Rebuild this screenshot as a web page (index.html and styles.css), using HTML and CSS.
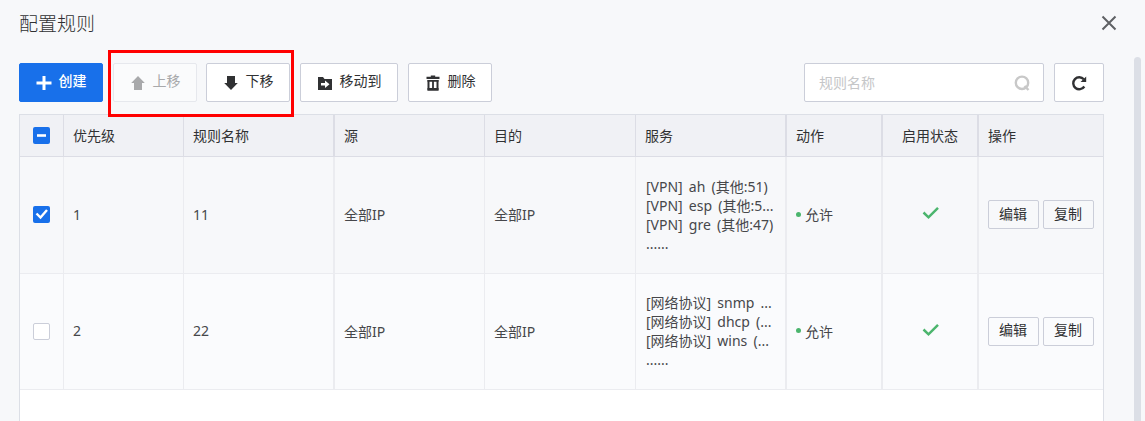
FILE: index.html
```html
<!DOCTYPE html>
<html lang="zh-CN">
<head>
  <meta charset="UTF-8" />
  <title>配置规则</title>
  <link rel="stylesheet" href="styles.css">
</head>
<body>
  <div class="dialog">
    <div class="dialog-header">
      <h1>配置规则</h1>
      <svg class="close" width="16" height="16" viewBox="0 0 16 16"><path d="M1.500 1.500l13 13M14.500 1.500l-13 13" fill="none" stroke="#5f6164" stroke-width="2"/></svg>
    </div>

    <div class="toolbar">
      <button class="btn primary">
        <svg width="16" height="16" viewBox="0 0 16 16"><path d="M8 1v14M.5 8h15" stroke="#fff" stroke-width="3"/></svg>
        <span>创建</span>
      </button>
      <div class="move-group">
        <button class="btn disabled">
          <svg width="16" height="16" viewBox="0 0 16 16"><path d="M8 1l6.800 7H12v7H4V8H1.200z" fill="#a8a9ab"/></svg>
          <span>上移</span>
        </button>
        <button class="btn">
          <svg width="16" height="16" viewBox="0 0 16 16"><path d="M8 15l6.800-7H12V1H4v7H1.200z" fill="#303133"/></svg>
          <span>下移</span>
        </button>
        <div class="highlight"></div>
      </div>
      <button class="btn wide">
        <svg width="16" height="16" viewBox="0 0 16 16"><path d="M1 2h5l1.500 2H15v11H1z" fill="#303133"/><path d="M4 8h4V5.500L12.500 9.300 8 13v-2.500H4z" fill="#fff"/></svg>
        <span>移动到</span>
      </button>
      <button class="btn">
        <svg width="16" height="16" viewBox="0 0 16 16"><path d="M1.500 1.800h4.300V.5h4.400v1.300h4.300V4h-13z" fill="#303133"/><path d="M3.500 5v9.500h9V5" fill="none" stroke="#303133" stroke-width="2"/><path d="M2.500 5h11v1.800h-11zM2.500 13h11v2.500h-11zM7.100 6h1.800v8H7.100z" fill="#303133"/></svg>
        <span>删除</span>
      </button>
      <div class="search">
        <span>规则名称</span>
        <svg width="16" height="16" viewBox="0 0 16 16"><circle cx="8" cy="7.800" r="6.200" fill="none" stroke="#c8c8c8" stroke-width="2.400"/><path d="M10.500 11l4 4" stroke="#c8c8c8" stroke-width="2.400"/></svg>
      </div>
      <button class="btn refresh">
        <svg width="16" height="16" viewBox="0 0 16 16"><path d="M12.800 4.300A6 6 0 1 0 13.300 11.500" fill="none" stroke="#303133" stroke-width="2.400"/><path d="M15.200 1.500v5.500H9.500z" fill="#303133"/></svg>
      </button>
    </div>

    <div class="table">
      <div class="row head">
        <div class="cell check"><span class="checkbox checked"><svg width="17" height="17" viewBox="0 0 17 17"><path d="M4 8.500h9" stroke="#fff" stroke-width="2.600"/></svg></span></div>
        <div class="cell">优先级</div>
        <div class="cell thick">规则名称</div>
        <div class="cell">源</div>
        <div class="cell">目的</div>
        <div class="cell thick">服务</div>
        <div class="cell thick">动作</div>
        <div class="cell thick center">启用状态</div>
        <div class="cell">操作</div>
      </div>

      <div class="row selected">
        <div class="cell check"><span class="checkbox checked"><svg width="17" height="17" viewBox="0 0 17 17"><path d="M3.500 7.500l4 4 6.500-7.500" fill="none" stroke="#fff" stroke-width="2.400"/></svg></span></div>
        <div class="cell">1</div>
        <div class="cell thick">11</div>
        <div class="cell">全部IP</div>
        <div class="cell">全部IP</div>
        <div class="cell thick services">
          <p>[VPN] ah (其他:51)</p>
          <p>[VPN] esp (其他:5...</p>
          <p>[VPN] gre (其他:47)</p>
          <p>......</p>
        </div>
        <div class="cell thick"><i class="dot"></i>允许</div>
        <div class="cell thick center"><svg class="tick" width="18" height="14" viewBox="0 0 18 14"><path d="M1.500 6.500l5 4.800 9.500-9.500" fill="none" stroke="#4bb56d" stroke-width="2.500"/></svg></div>
        <div class="cell actions"><button>编辑</button><button>复制</button></div>
      </div>

      <div class="row">
        <div class="cell check"><span class="checkbox"></span></div>
        <div class="cell">2</div>
        <div class="cell thick">22</div>
        <div class="cell">全部IP</div>
        <div class="cell">全部IP</div>
        <div class="cell thick services">
          <p>[网络协议] snmp ...</p>
          <p>[网络协议] dhcp (...</p>
          <p>[网络协议] wins (...</p>
          <p>......</p>
        </div>
        <div class="cell thick"><i class="dot"></i>允许</div>
        <div class="cell thick center"><svg class="tick" width="18" height="14" viewBox="0 0 18 14"><path d="M1.500 6.500l5 4.800 9.500-9.500" fill="none" stroke="#4bb56d" stroke-width="2.500"/></svg></div>
        <div class="cell actions"><button>编辑</button><button>复制</button></div>
      </div>
    </div>

    <div class="scrollbar"></div>
  </div>
</body>
</html>
```
FILE: styles.css
```css
* {
  box-sizing: border-box;
  margin: 0;
  padding: 0;
}

body {
  font-family: "Noto Sans", "Noto Sans CJK SC", sans-serif;
  font-size: 14px;
  color: #46474a;
  background: #f7f8fa;
  overflow: hidden;
}

.dialog {
  position: relative;
  display: flex;
  flex-direction: column;
  height: 421px;
  padding: 0 41px 0 19px;
}

.dialog-header {
  display: flex;
  justify-content: space-between;
  align-items: center;
  height: 46px;
  margin-right: -13px;
  margin-bottom: 17px;
  flex: none;
}

.dialog-header h1 {
  margin-top: -2px;
  font-size: 19px;
  font-weight: 300;
  font-family: "Noto Sans CJK SC", sans-serif;
  color: #303133;
}

.toolbar {
  display: flex;
  gap: 10px;
  height: 39px;
  margin-bottom: 12px;
  flex: none;
}

.btn {
  display: flex;
  align-items: center;
  justify-content: center;
  gap: 7px;
  width: 84px;
  height: 39px;
  border: 1px solid #cbced9;
  border-radius: 2px;
  background: #fff;
  font: inherit;
  line-height: 20px;
  color: #303133;
}

.btn span {
  margin-top: -3px;
}

.btn.primary {
  background: #1870ea;
  border-color: #1870ea;
  color: #fff;
  font-weight: 500;
}

.btn.disabled {
  background: #fafbfc;
  border-color: #e6e8ed;
  color: #a8a9ab;
}

.btn.wide {
  width: 98px;
}

.btn.refresh {
  width: 50px;
}

.move-group {
  position: relative;
  display: flex;
  gap: 9px;
}

.highlight {
  position: absolute;
  left: -5px;
  top: -13px;
  width: 186px;
  height: 67px;
  border: 3px solid #f00;
}

.search {
  display: flex;
  align-items: center;
  justify-content: space-between;
  width: 240px;
  margin-left: auto;
  padding: 0 13px 0 14px;
  border: 1px solid #cbced9;
  border-radius: 2px;
  background: #fff;
  color: #c5c6c8;
}

.search span {
  margin-top: -2px;
}

.table {
  flex: 1;
  width: 1085px;
  border: 1px solid #dcdfe6;
  border-bottom: 0;
  background: #fff;
}

.row {
  display: grid;
  grid-template-columns: 44px 120px 151px 150px 151px 151px 96px 96px 124px;
  height: 116px;
  background: #fafbfd;
}

.row.selected {
  height: 117px;
  background: #f7f8fa;
}

.row.head {
  height: 42px;
  background: #f0f1f5;
  color: #303133;
}

.cell {
  display: flex;
  align-items: center;
  padding: 0 0 2px 9px;
  border-right: 1px solid #ebecf0;
  border-bottom: 1px solid #ebecf0;
  white-space: nowrap;
  overflow: hidden;
}

.cell.thick {
  border-right-width: 2px;
}

.cell:last-child {
  border-right: 0;
}

.head .cell {
  border-color: #dcdde5;
}

.cell.center {
  justify-content: center;
  padding-left: 0;
}

.cell.check {
  justify-content: center;
  padding: 0 0 1px;
}

.cell.services {
  flex-direction: column;
  align-items: flex-start;
  justify-content: center;
  padding: 0 0 1px 10px;
  word-spacing: 2.5px;
}

.services p {
  line-height: 19px;
}

.checkbox {
  width: 17px;
  height: 17px;
  border: 1px solid #cbced9;
  border-radius: 2px;
  background: #fff;
}

.checkbox.checked {
  border: 0;
  background: #1870ea;
}

.checkbox svg {
  display: block;
}

.dot {
  width: 5px;
  height: 5px;
  margin-right: 4px;
  border-radius: 50%;
  background: #4bb56d;
}

.tick {
  margin: 0 0 2px 2px;
}

.cell.actions {
  gap: 4px;
  padding-bottom: 1px;
}

.actions button {
  width: 51px;
  height: 29px;
  padding: 0 1px 2px 0;
  border: 1px solid #cbced9;
  border-radius: 2px;
  background: transparent;
  font: inherit;
  line-height: 20px;
  color: #303133;
}

.scrollbar {
  position: absolute;
  right: 4px;
  top: 57px;
  width: 7px;
  height: 380px;
  border-radius: 4px;
  background: #dcdfe6;
}
```
